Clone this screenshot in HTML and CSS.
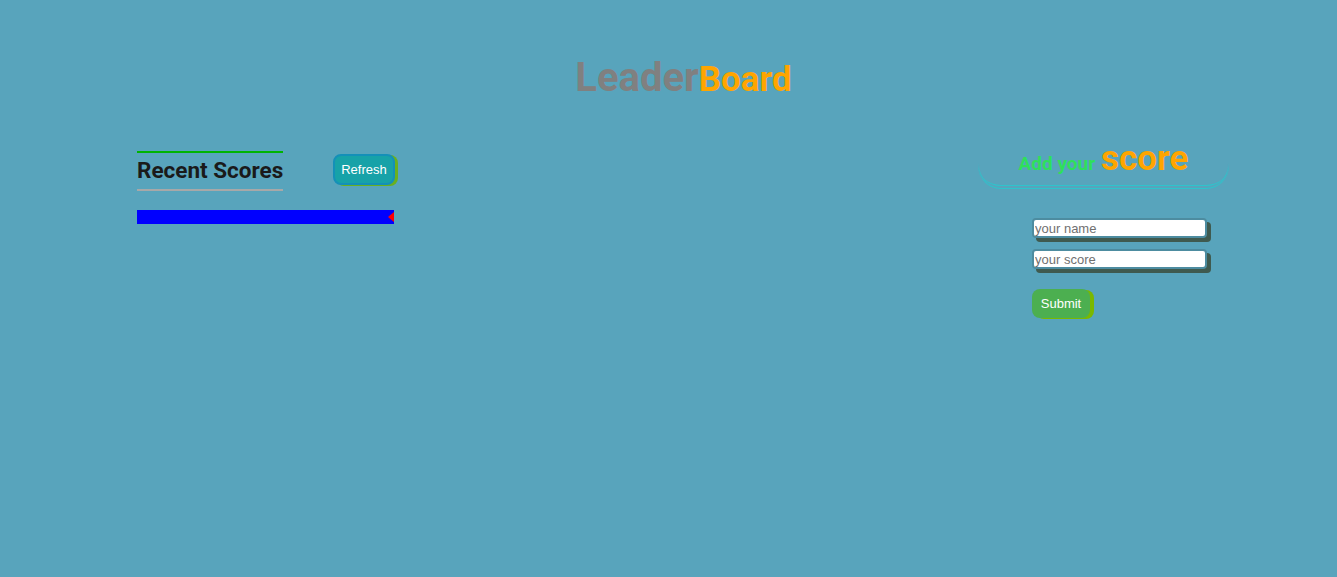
FILE: index.html
```html
<!DOCTYPE html>
<html>
<head>
<meta charset="utf-8">
<link rel="stylesheet" href="styles.css">
</head>
<body>
<header class="top">
  <h1 class="title"><span class="leader">Leader</span><span class="board">Board</span></h1>
</header>
<main class="content">
  <section class="scores">
    <div class="scores-head">
      <h2 class="scores-title">Recent Scores</h2>
      <button class="refresh">Refresh</button>
    </div>
    <ul class="score-list"><li class="score-item"></li></ul>
  </section>
  <section class="add">
    <h2 class="add-title"><span class="add-small">Add your</span> <span class="add-big">score</span></h2>
    <form class="add-form">
      <input class="field" type="text" placeholder="your name">
      <input class="field" type="text" placeholder="your score">
      <button class="submit" type="button">Submit</button>
    </form>
  </section>
</main>
</body>
</html>
```
FILE: styles.css
```css
html, body {
  margin: 0;
  padding: 0;
  background: #58a4bc;
  min-height: 100%;
}
body {
  font-family: Roboto, "Liberation Sans", sans-serif;
  height: 577px;
}
.top {
  display: flex;
  justify-content: center;
  padding-top: 54px;
  padding-left: 30px;
}
.title {
  margin: 0;
  font-weight: 700;
  line-height: 48px;
  display: flex;
  align-items: baseline;
}
.leader {
  color: #808080;
  font-size: 40px;
}
.board {
  color: #ffa500;
  font-size: 35px;
}
.content {
  display: flex;
  justify-content: space-between;
  padding: 0 108px 0 137px;
  margin-top: 39px;
}
.scores {
  width: 261px;
  padding-top: 9px;
}
.scores-head {
  display: flex;
  justify-content: space-between;
  align-items: flex-start;
}
.scores-title {
  margin: 0;
  margin-top: -1px;
  font-size: 22.5px;
  font-weight: 700;
  color: #1a1a1a;
  border-top: 2px solid #00b400;
  border-bottom: 2px solid #a8a8a8;
  padding: 5px 0 7px;
  line-height: 24px;
}
.refresh {
  font-family: "Liberation Sans", Arial, sans-serif;
  font-size: 13px;
  color: #fff;
  background: #17a2a8;
  border: 2px solid #1490b8;
  border-radius: 8px;
  padding: 0 4px;
  height: 31px;
  width: 62px;
  box-shadow: 3px 1px 0 #6ab01e;
  margin-right: 3px;
  margin-top: 2px;
}
.score-list {
  list-style: none;
  margin: 19px 0 0;
  padding: 0;
  width: 257px;
}
.score-item {
  height: 14px;
  background: #0000ff;
  position: relative;
}
.score-item::after {
  content: "";
  position: absolute;
  right: 0;
  top: 2px;
  border-right: 6px solid #ff0000;
  border-top: 5px solid transparent;
  border-bottom: 5px solid transparent;
}
.add {
  width: 251px;
  display: flex;
  flex-direction: column;
}
.add-title {
  margin: 0;
  width: 100%;
  text-align: center;
  font-weight: 700;
  padding: 1px 0 6px;
  line-height: 30px;
  border-bottom: 4px double #2ec4cc;
  border-radius: 25px;
  position: relative;
}
.add-title::before {
  content: "";
  position: absolute;
  left: 0;
  right: 0;
  top: 14px;
  bottom: -4px;
  border-left: 1px solid #2ec4cc;
  border-right: 1px solid #2ec4cc;
  border-radius: 0 0 25px 25px;
  -webkit-mask-image: linear-gradient(to bottom, transparent 0, transparent 6px, #000 20px);
  mask-image: linear-gradient(to bottom, transparent 0, transparent 6px, #000 20px);
}
.add-small {
  color: #2ee05a;
  font-size: 19px;
}
.add-big {
  color: #ffa500;
  font-size: 35px;
}
.add-form {
  display: flex;
  flex-direction: column;
  align-items: flex-start;
  margin-top: 29px;
  padding-left: 54px;
}
.field {
  font-family: "Liberation Sans", Arial, sans-serif;
  font-size: 13px;
  width: 175px;
  height: 20px;
  box-sizing: border-box;
  border: 2px solid #4d8ca0;
  border-radius: 4px;
  padding: 0 1px;
  background: #fff;
  box-shadow: 4px 4px 0 #3f5a4f;
  margin-bottom: 11px;
}
.field::placeholder { color: #707070; }
.submit {
  font-family: "Liberation Sans", Arial, sans-serif;
  font-size: 13px;
  color: #fff;
  background: #4caf50;
  border: none;
  border-radius: 8px;
  height: 29px;
  width: 58px;
  box-shadow: 4px 1px 0 #7ab800;
  margin-top: 9px;
}
```
